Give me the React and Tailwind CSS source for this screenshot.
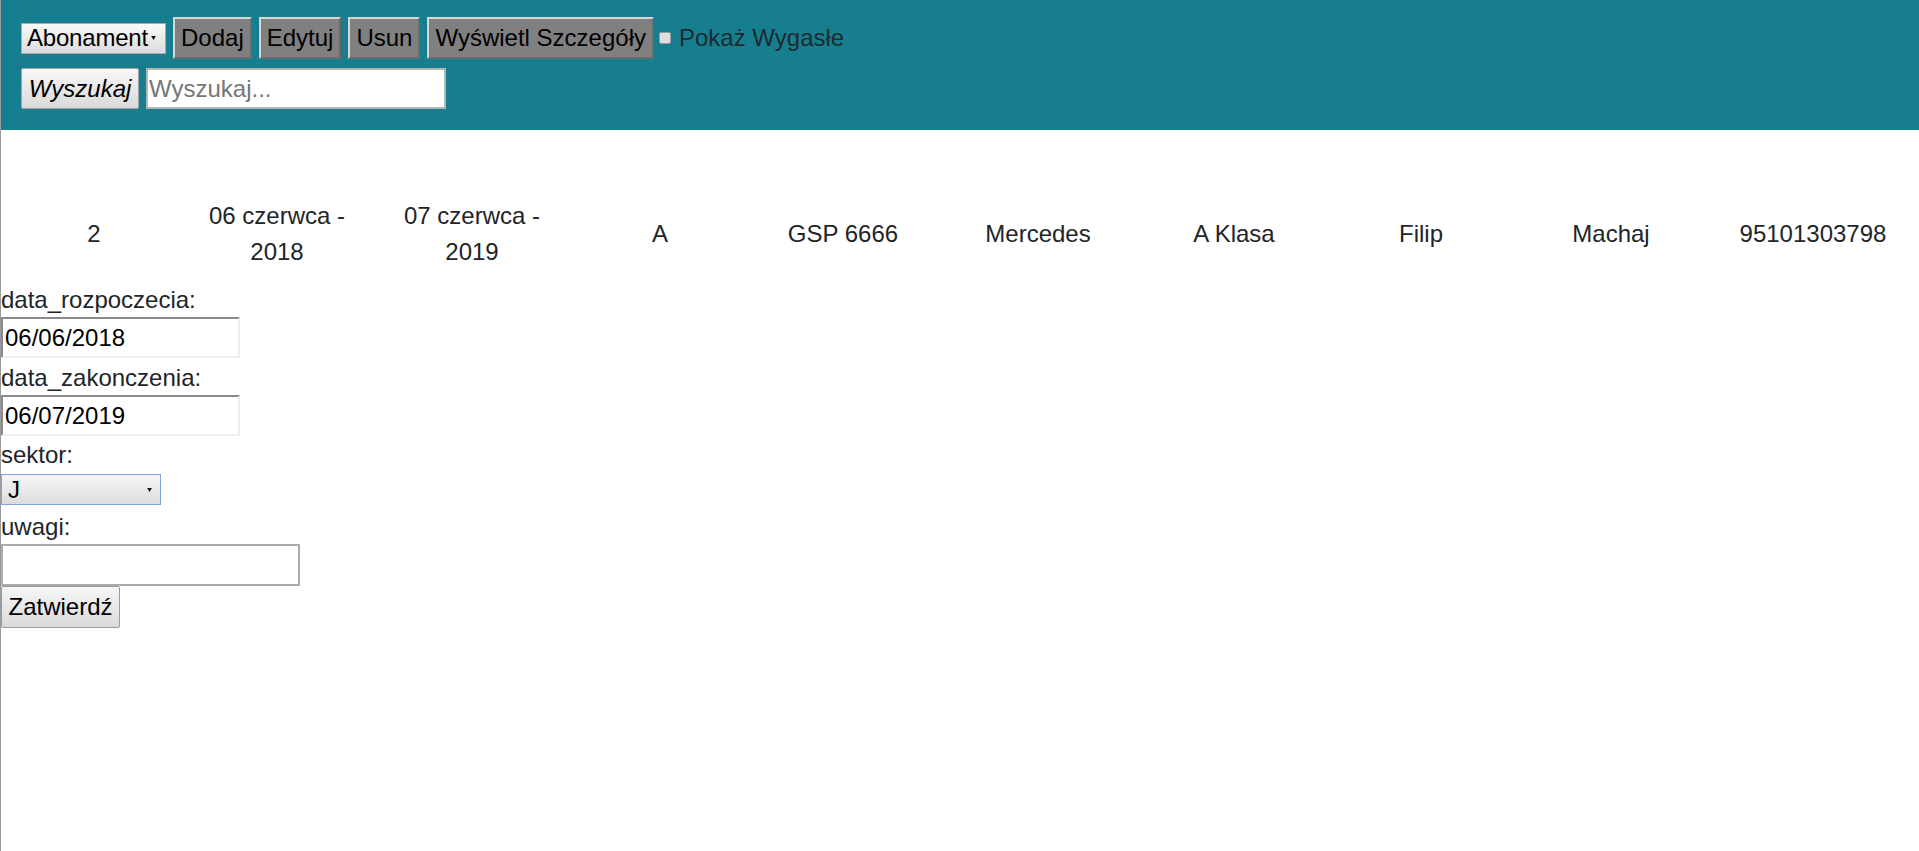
import React from "react";

const cells = [
  { w: "w-[186px]", text: "2" },
  { w: "w-[180px]", text: ["06 czerwca -", "2018"] },
  { w: "w-[210px]", text: ["07 czerwca -", "2019"] },
  { w: "w-[166px]", text: "A" },
  { w: "w-[200px]", text: "GSP 6666" },
  { w: "w-[190px]", text: "Mercedes" },
  { w: "w-[202px]", text: "A Klasa" },
  { w: "w-[172px]", text: "Filip" },
  { w: "w-[208px]", text: "Machaj" },
  { w: "w-[196px]", text: "95101303798" },
];

function Arrow() {
  return (
    <svg width="5" height="4" viewBox="0 0 6 5" className="pointer-events-none shrink-0">
      <polygon points="0,0 6,0 3,5" fill="#111" />
    </svg>
  );
}

function GrayButton({ children }) {
  return (
    <button className="h-[42px] px-[6px] bg-[#808080] text-black border-2 border-t-[#d6d6d6] border-l-[#d6d6d6] border-b-[#6a6a6a] border-r-[#6a6a6a]">
      {children}
    </button>
  );
}

function Label({ children, className = "" }) {
  return <div className={"h-[34px] leading-[34px] text-[#212529] " + className}>{children}</div>;
}

export default function App() {
  return (
    <div
      className="min-h-[851px] bg-white border-l border-[#9a9a9a] text-[24px] leading-[36px]"
      style={{ fontFamily: '"Liberation Sans", Arial, sans-serif' }}
    >
      {/* toolbar */}
      <div className="h-[130px] bg-[#177e8f] pl-[20px] pt-[17px]">
        <div className="flex items-center h-[42px]">
          <div className="flex items-center h-[31px] w-[145px] pl-[5px] pr-[9px] border border-[#a9a9a9] bg-gradient-to-b from-[#fafafa] to-[#dcdcdc] text-black">
            <span className="flex-1 leading-none tracking-[-0.2px]">Abonament</span>
            <Arrow />
          </div>
          <div className="ml-[7px] flex items-center gap-[7px]">
            <GrayButton>Dodaj</GrayButton>
            <GrayButton>Edytuj</GrayButton>
            <GrayButton>Usun</GrayButton>
            <GrayButton>Wyświetl Szczegóły</GrayButton>
          </div>
          <span className="ml-[5px] w-[12px] h-[12px] rounded-[2px] bg-[#dedede] border border-[#9a9a9a]" />
          <span className="ml-[8px] text-[#1d2a2f] leading-none">Pokaż Wygasłe</span>
        </div>
        <div className="flex items-center h-[41px] mt-[9px]">
          <button className="h-[41px] w-[118px] italic text-black border border-[#a3a3a3] rounded-[2px] bg-gradient-to-b from-[#f7f7f7] to-[#dadada]">
            Wyszukaj
          </button>
          <input
            placeholder="Wyszukaj..."
            className="ml-[7px] h-[41px] w-[300px] bg-white border-2 border-[#b4b4b4] px-[1px] text-black placeholder:text-[#767676] outline-none"
          />
        </div>
      </div>

      {/* record row */}
      <div className="flex items-center h-[72px] mt-[68px] text-[#212529] text-center">
        {cells.map((c, i) => (
          <div key={i} className={c.w + " shrink-0"}>
            {Array.isArray(c.text) ? (
              <>
                {c.text[0]}
                <br />
                {c.text[1]}
              </>
            ) : (
              c.text
            )}
          </div>
        ))}
      </div>

      {/* edit form */}
      <div className="mt-[13px]">
        <Label>data_rozpoczecia:</Label>
        <input
          readOnly
          value="06/06/2018"
          className="block h-[41px] w-[239px] pl-[2px] text-black bg-white border-2 border-t-[#8a8a8a] border-l-[#8a8a8a] border-b-[#eeeeee] border-r-[#eeeeee] outline-none"
        />
        <Label className="mt-[3px]">data_zakonczenia:</Label>
        <input
          readOnly
          value="06/07/2019"
          className="block h-[41px] w-[239px] pl-[2px] text-black bg-white border-2 border-t-[#8a8a8a] border-l-[#8a8a8a] border-b-[#eeeeee] border-r-[#eeeeee] outline-none"
        />
        <Label className="mt-[2px]">sektor:</Label>
        <div className="mt-[2px] flex items-center h-[31px] w-[160px] pl-[6px] pr-[8px] border border-[#7fa6dc] bg-gradient-to-b from-[#f7f7f7] to-[#dcdcdc] text-black">
          <span className="flex-1 leading-none">J</span>
          <Arrow />
        </div>
        <Label className="mt-[5px]">uwagi:</Label>
        <input className="block h-[42px] w-[299px] bg-white border-2 border-[#ababab] outline-none" />
        <button className="block h-[42px] w-[119px] text-black border border-[#9c9c9c] rounded-[2px] bg-gradient-to-b from-[#f6f6f6] to-[#dadada]">
          Zatwierdź
        </button>
      </div>
    </div>
  );
}
